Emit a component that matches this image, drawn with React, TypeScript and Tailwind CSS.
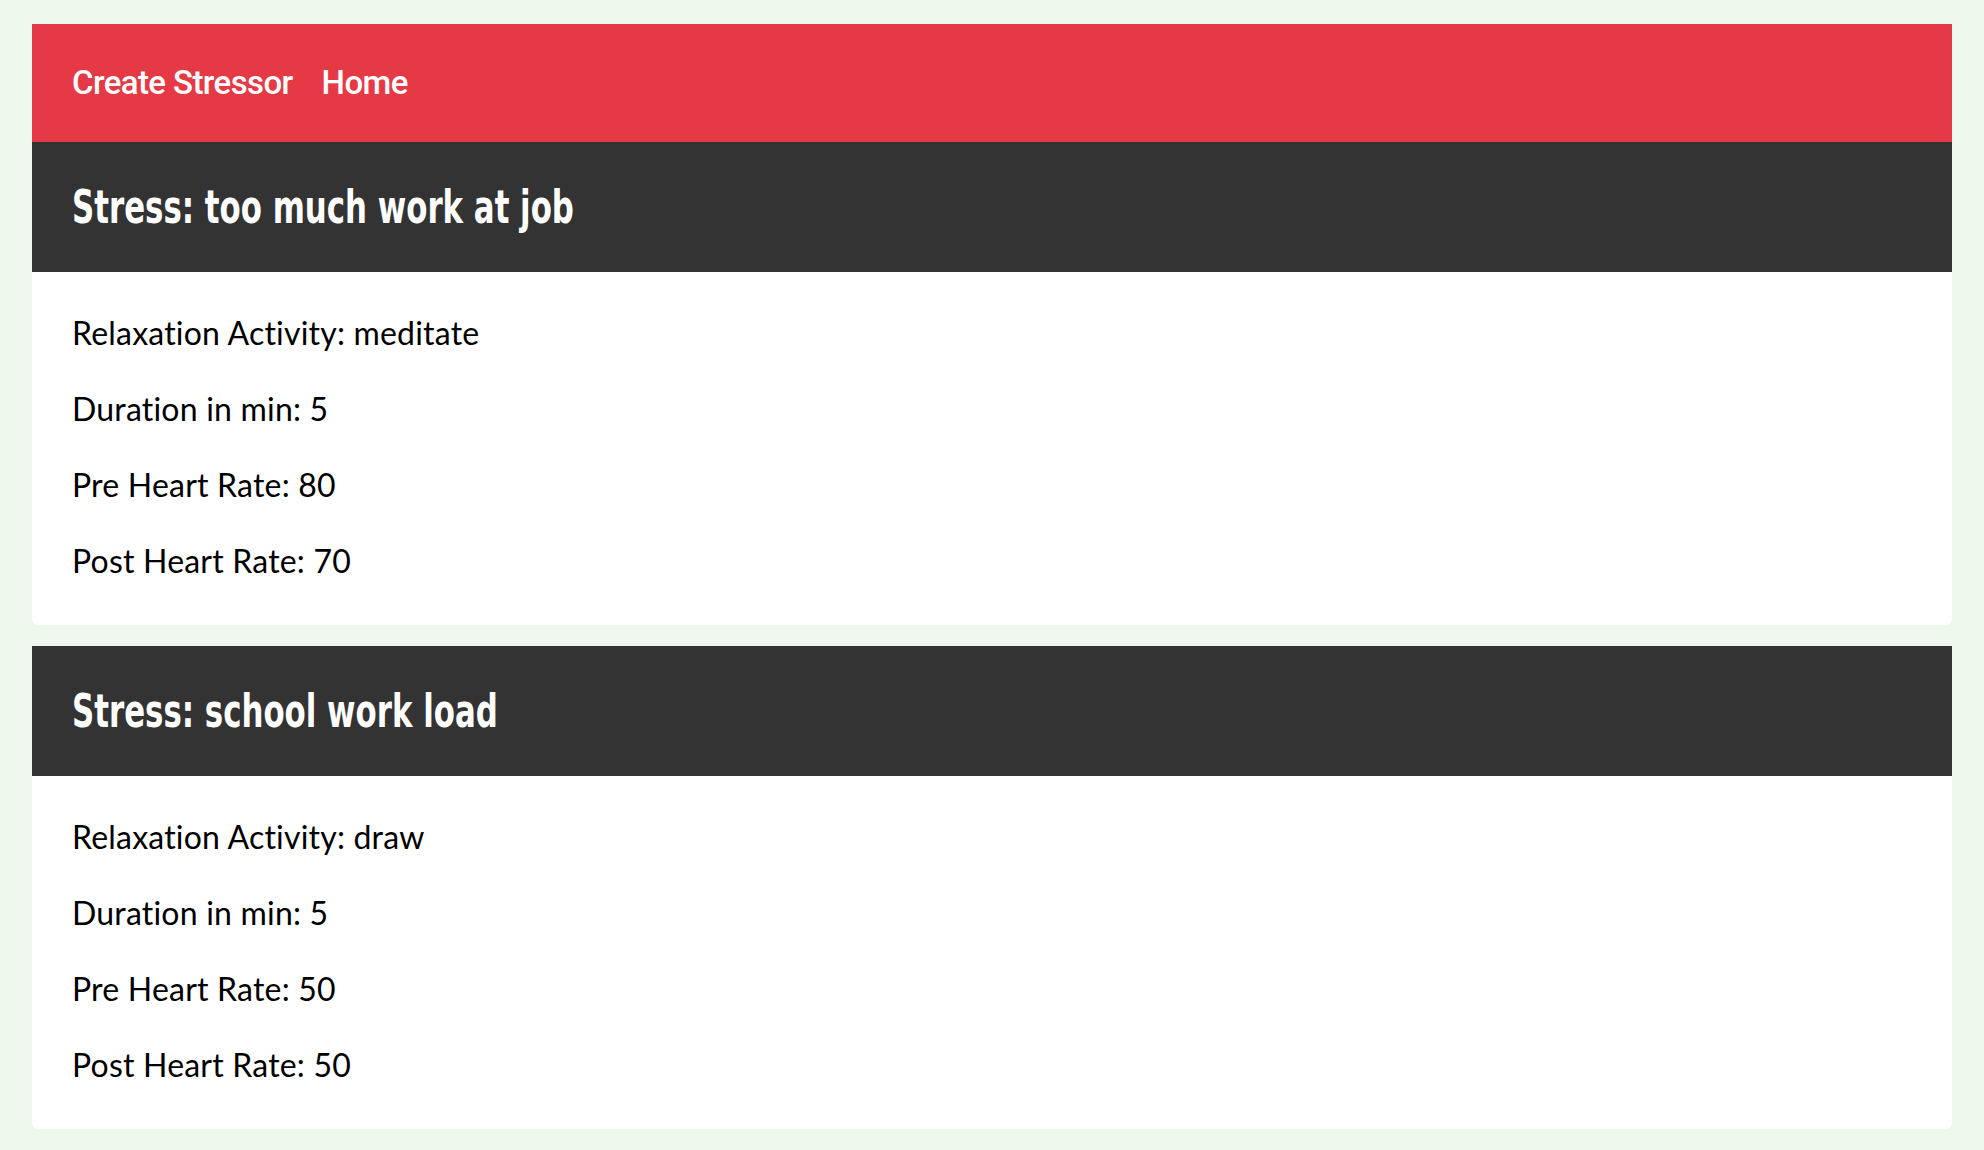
import React from "react";

type Stress = { title: string; activity: string; duration: string; pre: string; post: string };

const data: Stress[] = [
  { title: "too much work at job", activity: "meditate", duration: "5", pre: "80", post: "70" },
  { title: "school work load", activity: "draw", duration: "5", pre: "50", post: "50" },
];

function Card({ s }: { s: Stress }) {
  return (
    <div className="bg-white rounded-b-[6px] overflow-hidden">
      <div className="bg-[#333333] h-[130px] flex items-center pl-[40px]">
        <h2
          className="text-white text-[46px] font-bold leading-none whitespace-nowrap origin-left scale-x-[0.745]"
          style={{ fontFamily: '"DejaVu Sans Condensed", "DejaVu Sans", sans-serif' }}
        >
          Stress: {s.title}
        </h2>
      </div>
      <div
        className="pl-[40px] pt-[23px] pb-[26px] text-black text-[32px] tracking-[0.2px] flex flex-col"
        style={{ fontFamily: 'Lato, "Noto Sans", sans-serif' }}
      >
        <p className="leading-[76px]">Relaxation Activity: {s.activity}</p>
        <p className="leading-[76px]">Duration in min: {s.duration}</p>
        <p className="leading-[76px]">Pre Heart Rate: {s.pre}</p>
        <p className="leading-[76px]">Post Heart Rate: {s.post}</p>
      </div>
    </div>
  );
}

export default function App() {
  return (
    <div className="min-h-[1150px] bg-[#eff8ed] pt-[24px] px-[32px]">
      <nav
        className="bg-[#e63946] h-[118px] flex items-center pl-[40px] gap-[29px] text-white text-[33px] font-medium tracking-[-0.6px]"
        style={{ fontFamily: 'Roboto, "Liberation Sans", sans-serif' }}
      >
        <a>Create Stressor</a>
        <a>Home</a>
      </nav>
      <div className="flex flex-col gap-[21px]">
        {data.map((s) => (
          <Card key={s.title} s={s} />
        ))}
      </div>
    </div>
  );
}
